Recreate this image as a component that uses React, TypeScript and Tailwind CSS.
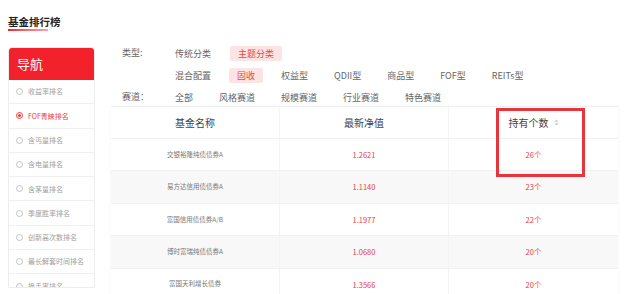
import React from 'react';

const FONT = { fontFamily: '"Noto Sans CJK SC", "Noto Sans", sans-serif' };

const navItems = [
  '收益率排名',
  'FOF青睐排名',
  '含丐量排名',
  '含电量排名',
  '含茅量排名',
  '季度胜率排名',
  '创新高次数排名',
  '最长解套时间排名',
  '换手率排名',
];

const typeRow2 = ['混合配置', '固收', '权益型', 'QDII型', '商品型', 'FOF型', 'REITs型'];
const tracks = ['全部', '风格赛道', '规模赛道', '行业赛道', '特色赛道'];

const funds = [
  { name: '交银裕隆纯债债券A', nav: '1.2621', count: '26个' },
  { name: '易方达信用债债券A', nav: '1.1140', count: '23个' },
  { name: '富国信用债债券A/B', nav: '1.1977', count: '22个' },
  { name: '博时富瑞纯债债券A', nav: '1.0680', count: '20个' },
  { name: '富国天利增长债券', nav: '1.3566', count: '20个' },
];

function Chip({ label, active }: { label: string; active?: boolean }) {
  return (
    <span
      className={`h-[15px] px-[8px] flex items-center text-[9px] leading-none rounded-[2px] ${
        active ? 'bg-[#fde4e4] text-[#f04545]' : 'text-[#666]'
      }`}
    >
      {label}
    </span>
  );
}

function SortIcon() {
  return (
    <svg width="5" height="7" viewBox="0 0 5 7" className="ml-[5px]">
      <path d="M2.5 0.5 L4.5 2.8 L0.5 2.8 Z" fill="#c8c8c8" />
      <path d="M2.5 6.5 L4.5 4.2 L0.5 4.2 Z" fill="#c8c8c8" />
    </svg>
  );
}

export default function App() {
  return (
    <div className="w-[640px] h-[294px] overflow-hidden bg-white" style={FONT}>
      <div className="pl-[8px] pt-[15px] flex flex-col items-start">
        <span className="text-[10.5px] font-bold text-[#222] leading-[13px]">基金排行榜</span>
        <div className="w-[40px] h-[2px] mt-[1px] bg-gradient-to-r from-[#e8202a] to-[#f7a3b4]" />
      </div>

      <div className="flex mt-[14px] pl-[8px]">
        {/* nav */}
        <div className="w-[87px] h-[241px] mt-[2px] overflow-hidden border border-[#ededed] rounded-t-[4px] shrink-0">
          <div className="h-[32px] bg-[#f3212b] flex items-center pl-[8px] text-white text-[13px]">导航</div>
          {navItems.map((item, i) => {
            const active = i === 1;
            return (
              <div
                key={item}
                className="h-[24.3px] border-b border-[#f0f0f0] flex items-center pl-[7px]"
              >
                {active ? (
                  <span className="w-[7px] h-[7px] rounded-full border border-[#f03c3c] flex items-center justify-center">
                    <span className="w-[3px] h-[3px] rounded-full bg-[#f03c3c]" />
                  </span>
                ) : (
                  <span className="w-[7px] h-[7px] rounded-full border border-[#c4c4c4]" />
                )}
                <span className={`ml-[5px] text-[7px] ${active ? 'text-[#f03c3c]' : 'text-[#a0a0a0]'}`}>{item}</span>
              </div>
            );
          })}
        </div>

        {/* main */}
        <div className="ml-[16px] w-[507px]">
          <div className="pl-[11px] flex flex-col gap-[6px]">
            <div className="flex items-center h-[16px]">
              <span className="w-[45px] text-[9px] text-[#666]">类型:</span>
              <div className="flex gap-[11px]">
                <Chip label="传统分类" />
                <Chip label="主题分类" active />
              </div>
            </div>
            <div className="flex items-center h-[16px]">
              <span className="w-[45px]" />
              <div className="flex gap-[10px]">
                {typeRow2.map((t) => (
                  <Chip key={t} label={t} active={t === '固收'} />
                ))}
              </div>
            </div>
            <div className="flex items-center h-[16px]">
              <span className="w-[45px] text-[9px] text-[#666]">赛道：</span>
              <div className="flex gap-[10px]">
                {tracks.map((t) => (
                  <Chip key={t} label={t} />
                ))}
              </div>
            </div>
          </div>

          {/* table */}
          <div className="relative mt-[1px] border-t border-[#f0f0f0] shadow-[0_0_3px_rgba(0,0,0,0.05)]">
            <div className="grid grid-cols-3 h-[32px] border-b border-[#f2f2f2]">
              <div className="flex items-center justify-center text-[10px] text-[#444] border-r border-[#f4f4f4]">基金名称</div>
              <div className="flex items-center justify-center text-[10px] text-[#444] border-r border-[#f4f4f4]">最新净值</div>
              <div className="flex items-center justify-center text-[10px] text-[#444]">
                持有个数
                <SortIcon />
              </div>
            </div>
            {funds.map((f, i) => (
              <div
                key={f.name}
                className={`grid grid-cols-3 h-[32.4px] border-b border-[#f2f2f2] ${i % 2 === 1 ? 'bg-[#f8f8f8]' : 'bg-white'}`}
              >
                <div className="flex items-center justify-center text-[6.5px] text-[#777] border-r border-[#f4f4f4]">{f.name}</div>
                <div className="flex items-center justify-center text-[7.5px] text-[#ea3a3f] border-r border-[#f4f4f4]">{f.nav}</div>
                <div className="flex items-center justify-center text-[7.5px] text-[#ea3a3f]">{f.count}</div>
              </div>
            ))}
            <div className="absolute left-[385px] top-[1px] w-[89px] h-[69px] border-[3px] border-[#e8353b] pointer-events-none" />
          </div>
        </div>
      </div>
    </div>
  );
}
